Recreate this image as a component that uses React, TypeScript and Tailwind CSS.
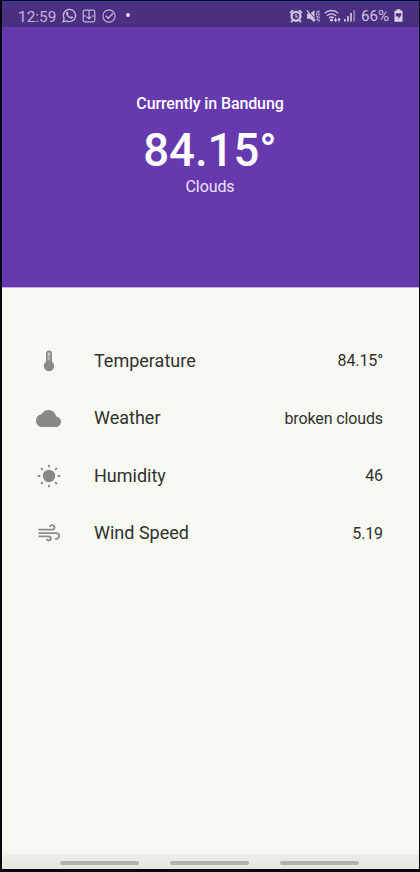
import React from "react";

function StatusLeft() {
  return (
    <div className="flex items-center h-full pl-4 text-[#c3b3dc]">
      <span className="w-[38px] text-[15.4px] leading-[18px] whitespace-nowrap mt-[4px]">12:59</span>
      <svg className="ml-[6px] mt-[2px]" width="15" height="15" viewBox="0 0 15 15" fill="none" stroke="currentColor" strokeWidth="1.4">
        <path d="M1.2 13.8l.9-3.4A6.1 6.1 0 1 1 4.6 12.9z" />
        <path d="M4.7 4.1l1-.3.9 1.9-.7.9c.6 1.2 1.3 1.9 2.6 2.5l.9-.9 1.8.9c0 1-1 1.7-2 1.6-2.5-.4-5-2.9-5.1-5.1 0-.6.2-1.1.6-1.5z" fill="currentColor" stroke="none" />
      </svg>
      <svg className="ml-[5px] mt-[2px]" width="14" height="14" viewBox="0 0 14 14" fill="none" stroke="currentColor" strokeWidth="1.2">
        <rect x="1.2" y="1.2" width="11.6" height="11.6" rx="1.8" />
        <path d="M7 1.5v8.5M4.6 7.6L7 10l2.4-2.4M1.5 7h2.5M10 7h2.5" />
      </svg>
      <svg className="ml-[6px] mt-[2px]" width="14" height="14" viewBox="0 0 14 14" fill="none" stroke="currentColor" strokeWidth="1.1">
        <circle cx="7" cy="7" r="6.1" />
        <path d="M3.8 6.8l2.5 2.5 4.9-5.3" strokeWidth="1.3" />
      </svg>
      <span className="ml-[10px] mt-[1px] size-[4px] rounded-full bg-[#e0d5ef]" />
    </div>
  );
}

function StatusRight() {
  return (
    <div className="flex items-center h-full pr-[16px] text-[#cfc2e2]">
      <svg className="mt-[2px]" width="14" height="14" viewBox="0 0 14 14" fill="none" stroke="currentColor">
        <circle cx="7" cy="7.3" r="4.4" strokeWidth="2.4" />
        <path d="M1 3.8l3-2.7M13 3.8l-3-2.7M3.5 11.5L2 13M10.5 11.5L12 13" strokeWidth="1.8" />
        <path d="M7 5v3h2.2" strokeWidth="1.2" />
      </svg>
      <svg className="ml-[3px] mt-[2px]" width="14" height="14" viewBox="0 0 14 14" fill="none" stroke="currentColor">
        <path d="M1 4.5h3L8.500 1.200v12L4 9.800H1z" fill="currentColor" stroke="none" />
        <path d="M1.8 1l7.5 9" stroke="#4b2f81" strokeWidth="1" />
        <path d="M.8 1.2l8.500 10.500" strokeWidth="1.2" />
        <path d="M10.5 2l1.200 1.500-1.200 1.800 1.200 1.800-1.200 1.800 1.200 2.600M13 1.500v11" strokeWidth="1.2" strokeDasharray="2 1" />
      </svg>
      <svg className="ml-[4px] mt-[2px]" width="17" height="14" viewBox="0 0 17 14" fill="none" stroke="currentColor" strokeWidth="1.5">
        <path d="M.8 4.200c4-3.500 9.500-3.500 13.400 0M3 6.700c2.700-2.400 6.400-2.400 9 0M5.200 9c1.400-1.200 3.200-1.200 4.600 0" />
        <circle cx="7.5" cy="11" r=".8" fill="currentColor" />
        <path d="M11.500 8.800v3M10 10.600l1.500 1.500 1.500-1.500M15 13V9.500M13.700 10.900L15 9.600l1.300 1.300" strokeWidth="1.1" />
      </svg>
      <svg className="ml-[3px] mt-[2px]" width="12" height="13" viewBox="0 0 12 13" fill="currentColor">
        <rect x="0" y="10" width="1.7" height="2.5" />
        <rect x="3.1" y="7" width="1.7" height="5.5" />
        <rect x="6.2" y="4" width="1.7" height="8.5" />
        <rect x="9.4" y="1" width="1.7" height="11.5" opacity=".55" />
      </svg>
      <span className="ml-[5px] mt-[3px] w-[28px] text-[15.2px] leading-[18px] whitespace-nowrap">66%</span>
      <svg className="ml-[5px] mt-[2px]" width="9" height="13" viewBox="0 0 9 13">
        <path d="M2.500 1.700V.3h4v1.400H8q.5 0 .5.500v10q0 .5-.5.500H1q-.5 0-.5-.5v-10q0-.5.500-.5z" fill="#ded3eb" />
        <path d="M1.800 4.200h5.400v2.400L4.200 10.600l.4-3.200H1.800z" fill="#4b3478" />
      </svg>
    </div>
  );
}

function Thermometer() {
  return (
    <svg width="12" height="22" viewBox="0 0 12 22">
      <path d="M3 3.600a3 3 0 0 1 6 0v8.100a5.200 5.200 0 1 1-6 0z" fill="#878984" />
      <path d="M4.700 3.700a1.300 1.300 0 0 1 2.600 0v6.500H4.700z" fill="#d7d9d3" />
      <path d="M6 5.200v6M6 4h1.300M6 6h1.300M6 8h1.300" stroke="#858782" strokeWidth=".8" />
    </svg>
  );
}

function Cloud() {
  return (
    <svg width="25" height="17" viewBox="0 4 24 16" preserveAspectRatio="none" fill="#878984">
      <path d="M19.350 10.040C18.670 6.590 15.640 4 12 4 9.110 4 6.600 5.640 5.350 8.040 2.340 8.360 0 10.910 0 14c0 3.310 2.690 6 6 6h13c2.760 0 5-2.240 5-5 0-2.640-2.050-4.780-4.650-4.960z" />
    </svg>
  );
}

function Sun() {
  return (
    <svg width="24" height="24" viewBox="0 0 24 24" fill="#878984">
      <circle cx="12" cy="12" r="6.2" />
      {[0, 45, 90, 135, 180, 225, 270, 315].map((a) => (
        <rect key={a} x="11.1" y=".7" width="1.8" height="2.6" rx=".5" transform={`rotate(${a} 12 12)`} />
      ))}
    </svg>
  );
}

function Wind() {
  return (
    <svg width="22" height="18" viewBox="0 0 22 18" fill="none" stroke="#8b8d88" strokeWidth="1.8">
      <path d="M.5 5.700h13.800a2.300 2.300 0 1 0-2.400-2.700" />
      <path d="M.5 9.100h17.300a2.900 2.900 0 1 1 0 5.700h-.8" />
      <path d="M.5 12.300h10.300a2.100 2.100 0 1 1-2.100 2.600" />
    </svg>
  );
}

const rows = [
  { icon: <Thermometer />, label: "Temperature", value: "84.15°" },
  { icon: <Cloud />, label: "Weather", value: "broken clouds" },
  { icon: <Sun />, label: "Humidity", value: "46" },
  { icon: <Wind />, label: "Wind Speed", value: "5.19" },
];

export default function App() {
  return (
    <div className="w-[420px] h-[872px] bg-[#060910] pl-[2px] pr-px pt-[1px] pb-[3px] font-['Roboto',sans-serif] overflow-hidden">
      <div className="flex flex-col h-full bg-[#f8f9f3]">
        <header className="flex justify-between h-[26px] shrink-0 bg-[#4b2f81] border-t border-[#2b3fa0]">
          <StatusLeft />
          <StatusRight />
        </header>
        <section className="flex flex-col items-center h-[261px] shrink-0 bg-[#6639af] border-b border-[#c7a9ea] pr-px pt-[67px] text-[#fdfcff]">
          <h1 className="text-[16px] leading-5 font-medium whitespace-nowrap tracking-[-0.12px]">Currently in Bandung</h1>
          <p className="mt-[10px] text-[45.5px] leading-[54px] font-medium">84.15°</p>
          <p className="-mt-px text-[16px] leading-5 tracking-[-0.1px] text-[#ebe3f6]">Clouds</p>
        </section>
        <main className="flex flex-col grow pt-[44px]">
          {rows.map((r) => (
            <div key={r.label} className="flex items-center h-[57.5px] pl-[33px] pr-[36px] text-[#30312e]">
              <div className="flex justify-center w-[27px]">{r.icon}</div>
              <span className="ml-[32px] grow text-[18px] leading-6">{r.label}</span>
              <span className="mt-px text-[16px] leading-6 tracking-[-0.12px]">{r.value}</span>
            </div>
          ))}
        </main>
        <div className="h-[6px] bg-gradient-to-b from-[#f8f9f3] to-[#f3f4ee]" />
        <nav className="flex justify-center gap-[31px] h-[14px] pr-[2px] pt-[6px] shrink-0 bg-gradient-to-b from-[#ecede7] to-[#e4e6df]">
          <span className="w-[79px] h-[4px] rounded-full bg-[#b1b3ac]" />
          <span className="w-[79px] h-[4px] rounded-full bg-[#b1b3ac]" />
          <span className="w-[79px] h-[4px] rounded-full bg-[#b1b3ac]" />
        </nav>
      </div>
    </div>
  );
}
